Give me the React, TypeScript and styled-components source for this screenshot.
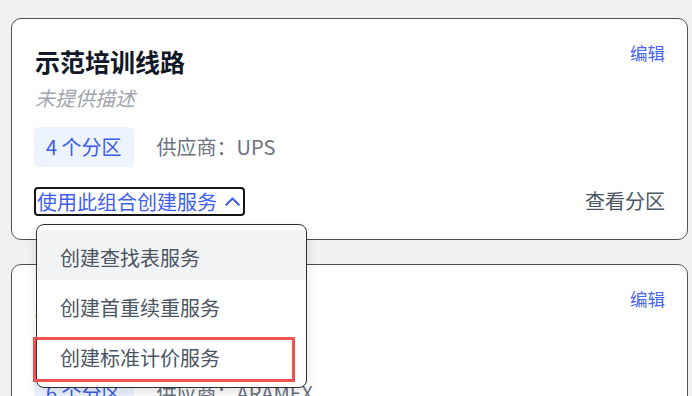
import React from 'react';
import styled, { createGlobalStyle } from 'styled-components';

const GlobalStyle = createGlobalStyle`
  html, body {
    margin: 0;
    padding: 0;
    background: #f0f1f3;
    font-family: "Noto Sans CJK SC", "Noto Sans", sans-serif;
  }
  * {
    box-sizing: border-box;
  }
`;

const Page = styled.div`
  height: 396px;
  overflow: hidden;
  padding: 18px 4px 0 11px;
  display: flex;
  flex-direction: column;
  gap: 24px;
`;

const Card = styled.div`
  position: relative;
  background: #fff;
  border: 1px solid #505050;
  border-radius: 10px;
  padding: 21px 22px 23px 23px;
  flex-shrink: 0;
`;

const Header = styled.div`
  display: flex;
  justify-content: space-between;
  align-items: flex-start;
`;

const Title = styled.h2`
  margin: 4px 0 0 0;
  font-size: 25px;
  line-height: 35px;
  font-weight: 700;
  color: #111827;
`;

const EditLink = styled.a`
  font-size: 17.5px;
  line-height: 25px;
  color: #4766f5;
  cursor: pointer;
`;

const Description = styled.p`
  margin: 4px 0 0 0;
  font-size: 20px;
  line-height: 30px;
  font-style: italic;
  color: #a0a5ae;
`;

const MetaRow = styled.div`
  display: flex;
  align-items: center;
  gap: 23px;
  margin-top: 14px;
`;

const ZoneBadge = styled.span`
  display: inline-block;
  margin-left: -1px;
  padding: 5px 12px;
  font-size: 20px;
  line-height: 30px;
  color: #3d5ce6;
  background: #eef4ff;
  border-radius: 5px;
`;

const Vendor = styled.span`
  font-size: 20px;
  line-height: 30px;
  color: #6b7280;
`;

const Footer = styled.div`
  display: flex;
  justify-content: space-between;
  align-items: center;
  margin-top: 19px;
`;

const MenuAnchor = styled.div`
  position: relative;
`;

const CreateButton = styled.button`
  display: flex;
  align-items: center;
  gap: 8px;
  margin-left: -1px;
  padding: 0 3px 0 1px;
  font-family: inherit;
  font-size: 20px;
  line-height: 25px;
  color: #3f5ef5;
  background: transparent;
  border: 2px solid #161616;
  border-radius: 4px;
  cursor: pointer;
`;

const ViewZones = styled.a`
  font-size: 20px;
  line-height: 30px;
  color: #4b5563;
`;

const Menu = styled.div`
  position: absolute;
  top: calc(100% + 8px);
  left: 1px;
  z-index: 10;
  width: 271px;
  padding: 5px 0 7px 0;
  background: #fff;
  border: 1px solid #2f2f2f;
  border-radius: 8px;
  box-shadow: 0 4px 12px rgba(0, 0, 0, 0.12);
`;

const MenuItem = styled.div<{ $active?: boolean; $marked?: boolean }>`
  position: relative;
  height: 50px;
  padding: 6px 23px 0 23px;
  display: flex;
  align-items: center;
  font-size: 20px;
  color: #4b5563;
  background: ${(p) => (p.$active ? '#f3f4f6' : 'transparent')};

  &::after {
    content: '';
    display: ${(p) => (p.$marked ? 'block' : 'none')};
    position: absolute;
    left: -4px;
    right: 11px;
    top: 7px;
    bottom: -2px;
    border: 3px solid #f05252;
  }
`;

const Chevron = () => (
  <svg width="15" height="9" viewBox="0 0 15 9" fill="none">
    <polyline
      points="1.2,7.8 7.5,1.5 13.8,7.8"
      stroke="#3f5ef5"
      strokeWidth="2"
      strokeLinecap="round"
      strokeLinejoin="round"
    />
  </svg>
);

type Route = {
  name: string;
  zones: number;
  vendor: string;
};

const routes: Route[] = [
  { name: '示范培训线路', zones: 4, vendor: 'UPS' },
  { name: '示范国际线路', zones: 6, vendor: 'ARAMEX' },
];

const menuItems = ['创建查找表服务', '创建首重续重服务', '创建标准计价服务'];

const RouteCard = ({ route, open }: { route: Route; open?: boolean }) => (
  <Card>
    <Header>
      <div>
        <Title>{route.name}</Title>
        <Description>未提供描述</Description>
      </div>
      <EditLink>编辑</EditLink>
    </Header>
    <MetaRow>
      <ZoneBadge>{route.zones} 个分区</ZoneBadge>
      <Vendor>供应商：{route.vendor}</Vendor>
    </MetaRow>
    <Footer>
      <MenuAnchor>
        <CreateButton>
          使用此组合创建服务
          <Chevron />
        </CreateButton>
        {open && (
          <Menu>
            {menuItems.map((item, i) => (
              <MenuItem key={item} $active={i === 0} $marked={i === 2}>
                {item}
              </MenuItem>
            ))}
          </Menu>
        )}
      </MenuAnchor>
      <ViewZones>查看分区</ViewZones>
    </Footer>
  </Card>
);

const App = () => (
  <>
    <GlobalStyle />
    <Page>
      <RouteCard route={routes[0]} open />
      <RouteCard route={routes[1]} />
    </Page>
  </>
);

export default App;
